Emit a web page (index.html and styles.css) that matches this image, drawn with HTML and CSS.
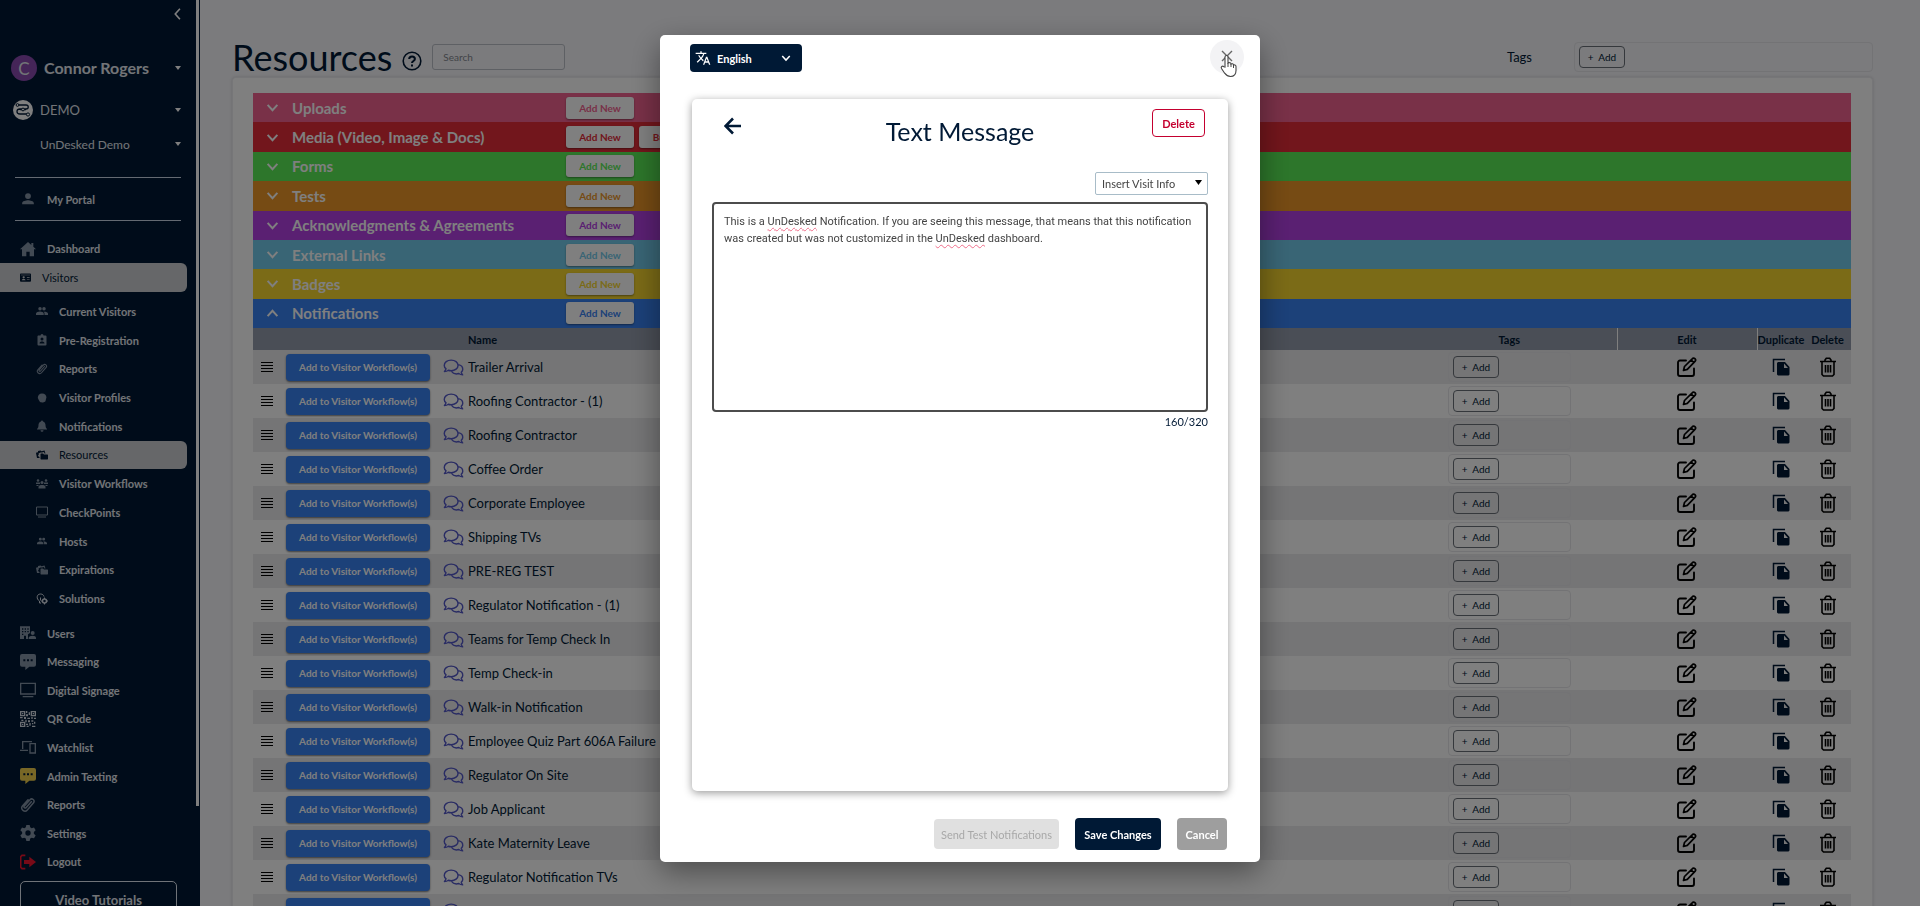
FILE: index.html
```html
<!DOCTYPE html>
<html lang="en">

<head>
    <meta charset="UTF-8">
    <meta name="viewport" content="width=device-width, initial-scale=1.0">
    <title>Resources</title>
    <link rel="stylesheet" href="styles.css">
</head>

<body>
    <!-- icons -->
    <svg class="sprite" aria-hidden="true">
        <symbol id="i-down" viewBox="0 0 12 12"><path d="M1.5 3.5L6 8.5l4.5-5" fill="none" stroke="currentColor" stroke-width="1.8"/></symbol>
        <symbol id="i-up" viewBox="0 0 12 12"><path d="M1.5 8.5L6 3.5l4.5 5" fill="none" stroke="currentColor" stroke-width="1.8"/></symbol>
        <symbol id="i-left" viewBox="0 0 12 12"><path d="M8.5 1.5L4.5 6l4 4.5" fill="none" stroke="currentColor" stroke-width="1.4"/></symbol>
        <symbol id="i-person" viewBox="0 0 24 24"><path d="M12 12a5 5 0 1 0 0-10 5 5 0 0 0 0 10zM2 21v-2c0-3.5 6.5-5 10-5s10 1.5 10 5v2z"/></symbol>
        <symbol id="i-people" viewBox="0 0 24 24"><path d="M8 11a3.5 3.5 0 1 0 0-7 3.5 3.5 0 0 0 0 7zm8 0a3.5 3.5 0 1 0 0-7 3.5 3.5 0 0 0 0 7zM0 20v-3c0-2.5 4.5-4 8-4 3.600 0 7.5 1.5 7.5 4v3zm17 0v-3c0-1.600-.7-2.800-2-3.700 4-.3 9 .9 9 3.700v3z"/></symbol>
        <symbol id="i-home" viewBox="0 0 24 24"><path d="M12 1.5L0 12.500h3V23h6.500v-7h5v7H21V12.500h3l-4-3.700V3h-3v3z"/></symbol>
        <symbol id="i-card" viewBox="0 0 24 24"><path fill-rule="evenodd" d="M2 3h20a2 2 0 0 1 2 2v14a2 2 0 0 1-2 2H2a2 2 0 0 1-2-2V5a2 2 0 0 1 2-2zm0 3v1h20V6zm6 8a2.500 2.500 0 1 0 0-5 2.500 2.500 0 0 0 0 5zm-4 4h8c0-2-1.800-3-4-3s-4 1-4 3zm11-7v1.500h6V11zm0 4v1.500h6V15z"/></symbol>
        <symbol id="i-badge" viewBox="0 0 24 24"><path fill-rule="evenodd" d="M5 3h4a3 3 0 0 1 6 0h4a2 2 0 0 1 2 2v16a2 2 0 0 1-2 2H5a2 2 0 0 1-2-2V5c0-1.100.9-2 2-2zm7 10a3 3 0 1 0 0-6 3 3 0 0 0 0 6zm-5 6h10c0-3-2.500-4-5-4s-5 1-5 4z"/></symbol>
        <symbol id="i-clip" viewBox="0 0 24 24"><path d="M17 7l-8 9c-1.300 1.500-4-.5-2.700-2.200L15 4c3-3 8 1 5.300 4.700L11 19.500c-4 4.500-11-1-7.300-6L12 4" fill="none" stroke="currentColor" stroke-width="2.2" stroke-linecap="round"/></symbol>
        <symbol id="i-head" viewBox="0 0 24 24"><path d="M12 1c7 0 11 4 10.500 10l-2 8c-2 4-12 5-14 1.500L4 16 2 12C1.500 5 6 1 12 1z"/></symbol>
        <symbol id="i-bell" viewBox="0 0 24 24"><path d="M12 1a2 2 0 0 0-2 2c-3.500 1-5 4-5 7 0 4-1 6-3 8v1h20v-1c-2-2-3-4-3-8 0-3-1.500-6-5-7a2 2 0 0 0-2-2zM9 20.500a3 3 0 0 0 6 0z"/></symbol>
        <symbol id="i-folders" viewBox="0 0 24 24"><path d="M10 9h4l2 2h7l1 1v8l-1 1H10l-1-1V10z"/><path d="M7 18H2L0 8l1-1 3-.5V4l5-1 2 1.500L17 3l2 6h-2l-1-3-4 1H9L7 8l-2 1 1 2-2 1 1 3 2 1z"/></symbol>
        <symbol id="i-group" viewBox="0 0 24 24"><circle cx="4" cy="5" r="2.500"/><circle cx="20" cy="5" r="2.500"/><circle cx="12" cy="9" r="3"/><path d="M0 12V9h8v3zm16 0V9h8v3zM5 21v-3c0-3 3-4 7-4s7 1 7 4v3zM1 14h4v2H1zm18 0h4v2h-4z"/></symbol>
        <symbol id="i-monitor" viewBox="0 0 24 24"><path d="M1 2h22v16H1zM4 22h16" fill="none" stroke="currentColor" stroke-width="2"/></symbol>
        <symbol id="i-bulb" viewBox="0 0 24 24"><path d="M7 20v-4C0 12 1 2 9 2c4 0 6 2 7 5M7 20h3M9 15V9" fill="none" stroke="currentColor" stroke-width="2"/><circle cx="17" cy="16" r="4" fill="none" stroke="currentColor" stroke-width="3"/><path d="M16 9h2v3h-2zm0 11h2v3h-2zm-6-5h3v2h-3zm11 0h3v2h-3z"/></symbol>
        <symbol id="i-building" viewBox="0 0 24 24"><path fill-rule="evenodd" d="M1 2h14v10l-3 2v7H9v-5H6v5H0V2zm2 3v2h2V5zm4 0v2h2V5zm4 0v2h2V5zM3 9v2h2V9zm4 0v2h2V9zm4 0v2h2V9zM3 13v2h2v-2z"/><circle cx="19" cy="12" r="3"/><path d="M13 21v-2c0-2 3-3 6-3s5 1 5 3v2z"/></symbol>
        <symbol id="i-chat" viewBox="0 0 24 24"><path fill-rule="evenodd" d="M3 0h18a3 3 0 0 1 3 3v13a3 3 0 0 1-3 3h-7l-6 5v-5H3a3 3 0 0 1-3-3V3a3 3 0 0 1 3-3zm2 8v3h3V8zm5.500 0v3h3V8zM16 8v3h3V8z"/></symbol>
        <symbol id="i-qr" viewBox="0 0 24 24"><path d="M1 1h6v6H1zM17 1h6v6h-6zM1 17h6v6H1z" fill="none" stroke="currentColor" stroke-width="2"/><path d="M9 0h2v3H9zm4 2h2v4h-2zM9 5h3v3H9zM0 9h4v2H0zm6 0h3v3H6zm5 1h4v2h-4zm6-1h2v3h-2zm4 1h3v2h-3zM2 13h3v2H2zm6 0h2v4H8zm4 1h3v3h-3zm5 0h3v2h-3zm4 2h2v3h-2zM9 19h3v2H9zm5-1h2v4h-2zm4 0h2v2h-2zm0 4h5v2h-5zm-8 0h3v2h-3zM3 3h2v2H3zm16 0h2v2h-2zM3 19h2v2H3z"/></symbol>
        <symbol id="i-devices" viewBox="0 0 24 24"><path d="M18 4H4v11M0 17h12M15 7h8v14h-8z" fill="none" stroke="currentColor" stroke-width="2"/></symbol>
        <symbol id="i-gear" viewBox="0 0 24 24"><path fill-rule="evenodd" d="M9.500 0h5l.8 3.500 2.200 1.200L21 3.600l2.500 4.300-2.700 2.500v2.800l2.700 2.500-2.500 4.300-3.500-1-2.200 1.300-.8 3.700h-5l-.8-3.700L6.500 19 3 20 .5 15.700l2.700-2.500v-2.800L.5 7.900 3 3.600l3.500 1.100 2.200-1.200zM12 16a4 4 0 1 0 0-8 4 4 0 0 0 0 8z"/></symbol>
        <symbol id="i-logout" viewBox="0 0 24 24"><path d="M8 2H3L1 4v16l2 2h5" fill="none" stroke="currentColor" stroke-width="2.500"/><path d="M6 9h8V4l10 8-10 8v-5H6z"/></symbol>
        <symbol id="i-bars" viewBox="0 0 12 12"><path d="M0 1.500h12M0 4.500h12M0 7.500h12M0 10.500h12" stroke="currentColor" stroke-width="1.200"/></symbol>
        <symbol id="i-talk" viewBox="0 0 22 18"><path d="M8.500 1.200c4.200 0 7.300 2.500 7.300 5.600s-3.100 5.600-7.300 5.600c-1 0-2-.1-2.900-.5-1 .8-2.500 1.400-4.200 1.400.8-.9 1.500-1.900 1.700-3C1.900 9.300 1.200 8 1.200 6.800c0-3.100 3.100-5.600 7.300-5.600zM16 6c3 .6 4.800 2.500 4.800 4.800 0 1.300-.6 2.300-1.600 3.200.2 1.100.8 2 1.500 2.800-1.500 0-3-.6-4.100-1.400-3.200.9-6.300-.2-7.800-2.700" fill="none" stroke="currentColor" stroke-width="1.500" stroke-linejoin="round"/></symbol>
        <symbol id="i-edit" viewBox="0 0 20 20"><path d="M9 3.500H3a2 2 0 0 0-2 2V17a2 2 0 0 0 2 2h12a2 2 0 0 0 2-2v-5.500" fill="none" stroke="currentColor" stroke-width="1.900" stroke-linecap="round"/><path d="M6.500 13.500l1-4L15.200 1.800a1.800 1.800 0 0 1 2.800 2.600l-7.700 8zM14 3l3 2.700" fill="none" stroke="currentColor" stroke-width="1.700" stroke-linejoin="round"/></symbol>
        <symbol id="i-copy" viewBox="0 0 18 18"><path d="M1.500 14V1.500H13" fill="none" stroke="currentColor" stroke-width="1.500"/><path fill-rule="evenodd" d="M6 4h7l4.500 5v7.500l-1 1H6l-1-1V5zm6 1.500V10h4z"/></symbol>
        <symbol id="i-trash" viewBox="0 0 18 20"><path d="M1 4.500h16M3 4.500V17.500l1.500 1.500h9l1.500-1.500V4.500M6 4V3l1.300-1.800h3.400L12 3v1M6.500 8v7.500M9 8v7.500M11.500 8v7.500" fill="none" stroke="currentColor" stroke-width="1.600"/></symbol>
    </svg>

    <div class="page">
        <aside class="sidebar">
            <div class="side-inner">
                <button class="collapse" aria-label="Collapse menu"><svg><use href="#i-left"/></svg></button>
                <div class="account user"><span class="avatar">C</span><span class="label">Connor Rogers</span><i class="caret"></i></div>
                <div class="account org">
                    <svg class="logo" viewBox="0 0 20 20"><circle cx="10" cy="10" r="10" fill="#fff"/><path d="M5 5h8c3 0 3 4 0 4H7c-4 0-4 5 0 5h7M7 9.500h6" fill="none" stroke="#001935" stroke-width="1.300"/><circle cx="4.500" cy="5" r="1.400" fill="#fff" stroke="#001935"/><circle cx="10" cy="9.500" r="1.400" fill="#fff" stroke="#001935"/><circle cx="15" cy="14.500" r="1.600" fill="#fff" stroke="#001935"/></svg>
                    <span class="label">DEMO</span><i class="caret"></i>
                </div>
                <div class="account site"><span class="label">UnDesked Demo</span><i class="caret"></i></div>
                <nav>
                    <a class="item portal" href="#"><svg><use href="#i-person"/></svg>My Portal</a>
                    <a class="item" href="#"><svg><use href="#i-home"/></svg>Dashboard</a>
                    <a class="item visitors active" href="#"><svg><use href="#i-card"/></svg>Visitors</a>
                    <div class="submenu">
                        <a class="item" href="#"><svg><use href="#i-people"/></svg>Current Visitors</a>
                        <a class="item" href="#"><svg><use href="#i-badge"/></svg>Pre-Registration</a>
                        <a class="item" href="#"><svg><use href="#i-clip"/></svg>Reports</a>
                        <a class="item" href="#"><svg class="small"><use href="#i-head"/></svg>Visitor Profiles</a>
                        <a class="item" href="#"><svg><use href="#i-bell"/></svg>Notifications</a>
                        <a class="item active" href="#"><svg><use href="#i-folders"/></svg>Resources</a>
                        <a class="item" href="#"><svg><use href="#i-group"/></svg>Visitor Workflows</a>
                        <a class="item" href="#"><svg><use href="#i-monitor"/></svg>CheckPoints</a>
                        <a class="item" href="#"><svg class="small"><use href="#i-people"/></svg>Hosts</a>
                        <a class="item" href="#"><svg><use href="#i-folders"/></svg>Expirations</a>
                        <a class="item" href="#"><svg class="bright"><use href="#i-bulb"/></svg>Solutions</a>
                    </div>
                    <div class="menu">
                        <a class="item" href="#"><svg><use href="#i-building"/></svg>Users</a>
                        <a class="item" href="#"><svg><use href="#i-chat"/></svg>Messaging</a>
                        <a class="item" href="#"><svg><use href="#i-monitor"/></svg>Digital Signage</a>
                        <a class="item" href="#"><svg class="bright"><use href="#i-qr"/></svg>QR Code</a>
                        <a class="item" href="#"><svg><use href="#i-devices"/></svg>Watchlist</a>
                        <a class="item" href="#"><svg class="gold"><use href="#i-chat"/></svg>Admin Texting</a>
                        <a class="item" href="#"><svg><use href="#i-clip"/></svg>Reports</a>
                        <a class="item" href="#"><svg><use href="#i-gear"/></svg>Settings</a>
                        <a class="item" href="#"><svg class="red"><use href="#i-logout"/></svg>Logout</a>
                    </div>
                </nav>
                <button class="tutorials">Video Tutorials</button>
            </div>
            <div class="side-scroll"></div>
        </aside>

        <main class="main">
            <header class="head">
                <h1>Resources</h1>
                <svg class="help" viewBox="0 0 20 20"><circle cx="10" cy="10" r="8.800" fill="none" stroke="currentColor" stroke-width="1.600"/><path d="M7.200 8c0-3.500 5.700-3.500 5.700 0 0 2-2.900 2-2.900 4M10 13.500v2" fill="none" stroke="currentColor" stroke-width="2"/></svg>
                <input class="search" type="text" placeholder="Search" aria-label="Search">
                <span class="tags-label">Tags</span>
                <div class="tag-box"><button class="add">+&nbsp; Add</button></div>
            </header>

            <section class="panel">
                <div class="bands">
                    <div class="band uploads"><svg><use href="#i-down"/></svg><h2>Uploads</h2><button>Add New</button></div>
                    <div class="band media"><svg><use href="#i-down"/></svg><h2>Media (Video, Image &amp; Docs)</h2><button>Add New</button><button>Bulk Add</button></div>
                    <div class="band forms"><svg><use href="#i-down"/></svg><h2>Forms</h2><button>Add New</button></div>
                    <div class="band tests"><svg><use href="#i-down"/></svg><h2>Tests</h2><button>Add New</button></div>
                    <div class="band acks"><svg><use href="#i-down"/></svg><h2>Acknowledgments &amp; Agreements</h2><button>Add New</button></div>
                    <div class="band links"><svg><use href="#i-down"/></svg><h2>External Links</h2><button>Add New</button></div>
                    <div class="band badges"><svg><use href="#i-down"/></svg><h2>Badges</h2><button>Add New</button></div>
                    <div class="band notes"><svg><use href="#i-up"/></svg><h2>Notifications</h2><button>Add New</button></div>
                </div>
                <table class="list">
                    <thead>
                        <tr>
                            <th class="c-drag"></th>
                            <th class="c-flow"></th>
                            <th class="c-icon"></th>
                            <th class="c-name">Name</th>
                            <th class="c-tags">Tags</th>
                            <th class="c-edit">Edit</th>
                            <th class="c-act">Duplicate</th>
                            <th class="c-last">Delete</th>
                        </tr>
                    </thead>
                    <tbody id="rows"></tbody>
                </table>
            </section>
        </main>
    </div>

    <div class="overlay">
        <div class="modal" role="dialog" aria-label="Text Message">
            <div class="modal-top">
                <button class="lang">
                    <svg class="translate" viewBox="0 0 24 24"><path d="M12.900 15.100l-2.600-2.500c1.700-1.900 3-4.200 3.700-6.600h3V4h-7V2H8v2H1v2h11.200C11.500 7.900 10.400 9.700 9 11.300 8.100 10.300 7.300 9.200 6.700 8h-2c.7 1.600 1.700 3.200 3 4.600l-5.100 5L4 19l5-5 3.100 3.100zM18.500 10h-2L12 22h2l1.100-3h4.800l1.100 3h2zm-2.600 7l1.600-4.300 1.600 4.300z"/></svg>
                    English
                    <svg class="chev"><use href="#i-down"/></svg>
                </button>
                <button class="close" aria-label="Close">
                    <svg viewBox="0 0 12 12"><path d="M1 1l10 10M11 1L1 11" stroke="currentColor" stroke-width="1.400"/></svg>
                </button>
            </div>
            <div class="editor">
                <div class="editor-head">
                    <button class="back" aria-label="Back"><svg viewBox="0 0 18 18"><path d="M17 9H2M9 1.500L1.500 9 9 16.500" fill="none" stroke="currentColor" stroke-width="2.600"/></svg></button>
                    <h2>Text Message</h2>
                    <button class="delete">Delete</button>
                </div>
                <select class="insert" aria-label="Insert Visit Info">
                    <option>Insert Visit Info</option>
                </select>
                <div class="message" contenteditable="true" spellcheck="false" role="textbox" aria-label="Message">This is a <u>UnDesked</u> Notification. If you are seeing this message, that means that this notification was created but was not customized in the <u>UnDesked</u> dashboard.</div>
                <p class="count">160/320</p>
            </div>
            <div class="modal-foot">
                <button class="send" disabled>Send Test Notifications</button>
                <button class="save">Save Changes</button>
                <button class="cancel">Cancel</button>
            </div>
            <svg class="pointer" viewBox="0 0 18 24"><path d="M5 13V3c0-2 3-2 3 0v6l1-.5c1 0 2 .5 2 1.500 1-.7 2.500 0 2.500 1 1.500-.5 2.500.3 2.500 1.500v4c0 4-2 6-5.500 6S6 21 4.500 19L1.500 14.500c-1-1.700 1-3 2.200-1.800z" fill="#fff" stroke="#444" stroke-width="1.100"/><path d="M8 9v4M11 10v3M13.500 11v3" stroke="#444"/></svg>
        </div>
    </div>

    <script>
        const names = [
            "Trailer Arrival", "Roofing Contractor - (1)", "Roofing Contractor", "Coffee Order",
            "Corporate Employee", "Shipping TVs", "PRE-REG TEST", "Regulator Notification - (1)",
            "Teams for Temp Check In", "Temp Check-in", "Walk-in Notification",
            "Employee Quiz Part 606A Failure", "Regulator On Site", "Job Applicant",
            "Kate Maternity Leave", "Regulator Notification TVs", "Contractor Notification"
        ]
        document.querySelector("#rows").innerHTML = names.map(name => `
            <tr>
                <td class="c-drag"><svg class="bars"><use href="#i-bars"/></svg></td>
                <td class="c-flow"><button class="flow">Add to Visitor Workflow(s)</button></td>
                <td class="c-icon"><svg class="talk"><use href="#i-talk"/></svg></td>
                <td class="c-name">${name}</td>
                <td class="c-tags"><div class="tag-box"><button class="add">+&nbsp; Add</button></div></td>
                <td class="c-edit"><button class="icon" aria-label="Edit"><svg><use href="#i-edit"/></svg></button></td>
                <td class="c-act"><button class="icon copy" aria-label="Duplicate"><svg><use href="#i-copy"/></svg></button></td>
                <td class="c-last"><button class="icon" aria-label="Delete"><svg><use href="#i-trash"/></svg></button></td>
            </tr>`).join("")
    </script>
</body>

</html>
```

FILE: styles.css
```css
* {
    padding: 0;
    margin: 0;
    box-sizing: border-box;
}

body {
    font-family: Lato, "Liberation Sans", sans-serif;
    font-size: 14px;
    color: #001935;
    overflow: hidden;
}

button,
input,
select {
    font-family: inherit;
}

button {
    border: none;
    background: none;
    cursor: pointer;
}

a {
    color: inherit;
    text-decoration: none;
}

svg {
    fill: currentColor;
    flex: none;
}

.sprite {
    display: none;
}

.page {
    display: flex;
    height: 100vh;
    overflow: hidden;
    background-color: #f6f6fa;
}

/* sidebar */
.sidebar {
    display: flex;
    flex: none;
    width: 200px;
    height: 100vh;
    overflow: hidden;
    background-color: #001935;
    color: #e4e8ee;
}

.side-inner {
    width: 196px;
    flex: none;
}

.side-scroll {
    width: 3px;
    height: 89%;
    background-color: #fff;
}

.collapse {
    display: block;
    margin: 7px 12px 0 auto;
    width: 14px;
    height: 14px;
    color: #fff;
}

.collapse svg {
    width: 14px;
    height: 14px;
}

.account {
    display: flex;
    align-items: center;
    padding: 0 15px 0 11px;
}

.account .label {
    flex: 1;
}

.user {
    margin-top: 33px;
    height: 27px;
    font-size: 16px;
    font-weight: 700;
    gap: 7px;
}

.org {
    height: 20px;
    margin-top: 19px;
    font-size: 13px;
    gap: 7px;
    padding-left: 13px;
}

.site {
    height: 20px;
    margin-top: 14px;
    font-size: 12px;
    padding-left: 40px;
}

.avatar {
    width: 26px;
    height: 26px;
    border-radius: 50%;
    background-color: #8a4ab0;
    font-size: 17px;
    font-weight: 400;
    line-height: 28px;
    text-align: center;
}

.logo {
    width: 20px;
    height: 20px;
}

.caret {
    border: 3px solid transparent;
    border-top: 4px solid #fff;
    border-bottom: none;
}

.item {
    display: flex;
    align-items: center;
    gap: 11px;
    height: 29px;
    padding-left: 20px;
    margin-right: 9px;
    font-size: 11px;
    font-weight: 700;
}

.item svg {
    width: 16px;
    height: 16px;
    color: #8594a6;
}

.item svg.bright {
    color: #d4dbe4;
}

.item svg.gold {
    color: #f0cf4c;
}

.item svg.red {
    color: #f0142f;
}

.item.portal {
    height: 44px;
    margin: 23px 15px 13px;
    padding-left: 5px;
    border-top: 1px solid #c8d4e4;
    border-bottom: 1px solid #c8d4e4;
}

.item.portal svg {
    height: 14px;
}

.visitors svg {
    width: 11px;
    height: 11px;
}

.item.active {
    background-color: #ccced2;
    color: #001935;
    border-radius: 0 6px 6px 0;
    font-weight: 400;
}

.item.active svg {
    color: #001935;
}

.submenu {
    display: grid;
    grid-auto-rows: 1fr;
    height: 316px;
    margin-top: 5px;
}

.submenu .item {
    height: auto;
    padding-left: 36px;
}

.submenu .item svg {
    width: 12px;
    height: 12px;
}

.submenu .item svg.small {
    width: 10px;
    margin: 0 1px;
}

.menu {
    display: grid;
    grid-auto-rows: 1fr;
    height: 257px;
    margin-top: 6px;
}

.menu .item {
    height: auto;
}

.tutorials {
    display: block;
    width: 157px;
    height: 38px;
    margin: 5px 0 0 20px;
    border: 1px solid #dfe6f0;
    border-radius: 5px;
    color: inherit;
    font-size: 13px;
    font-weight: 700;
}

/* main */
.main {
    flex: 1;
    min-width: 0;
    padding: 37px 47px 0 32px;
}

.head {
    display: flex;
    align-items: center;
    height: 40px;
}

.head h1 {
    font-size: 36px;
    font-weight: 400;
    margin-right: 10px;
}

.help {
    width: 20px;
    height: 20px;
    margin-top: 8px;
    margin-right: 10px;
}

.search {
    width: 133px;
    height: 26px;
    padding: 0 10px;
    border: 1px solid #bcc0c8;
    border-radius: 3px;
    background: none;
    font-size: 10px;
}

.search::placeholder {
    color: #848890;
}

.tags-label {
    margin-left: auto;
    margin-right: 42px;
    font-size: 13px;
}

.tag-box {
    height: 30px;
    padding: 3px 4px;
    border: 1px solid #e6e6ea;
    border-radius: 4px;
    text-align: left;
}

.head .tag-box {
    width: 299px;
}

.add {
    display: block;
    width: 46px;
    height: 22px;
    border: 1px solid #6a7078;
    border-radius: 4px;
    color: #001935;
    font-size: 10px;
}

.panel {
    padding: 15px 21px 0 20px;
    background-color: #fff;
    border: 1px solid #ececf0;
    border-bottom: none;
    border-radius: 4px 4px 0 0;
    box-shadow: 0 0 3px rgba(0, 0, 0, .15);
}

.bands {
    display: grid;
    grid-auto-rows: 1fr;
    height: 235px;
}

.band {
    display: flex;
    align-items: center;
    padding-left: 13px;
    color: #fff;
}

.band svg {
    width: 13px;
    height: 13px;
    margin-right: 13px;
}

.band h2 {
    width: 274px;
    font-size: 15px;
    font-weight: 700;
}

.band button {
    width: 68px;
    height: 22px;
    margin-right: 5px;
    border-radius: 3px;
    background-color: #fff;
    box-shadow: 0 1px 2px rgba(0, 0, 0, .4);
    font-size: 10px;
    font-weight: 700;
    color: inherit;
}

.uploads { background-color: #f26290; }
.media { background-color: #e42c38; }
.forms { background-color: #5aec56; }
.tests { background-color: #ec9628; }
.acks { background-color: #b440e4; }
.links { background-color: #72caea; }
.badges { background-color: #f6d62e; }
.notes { background-color: #3882f2; }

.uploads button { color: #f26290; }
.media button { color: #e42c38; }
.forms button { color: #5aec56; }
.tests button { color: #ec9628; }
.acks button { color: #b440e4; }
.links button { color: #72caea; }
.badges button { color: #f6d62e; }
.notes button { color: #3882f2; }

.list {
    width: 100%;
    table-layout: fixed;
    border-collapse: collapse;
}

.list th {
    height: 22px;
    background-color: #949cac;
    font-size: 11px;
    font-weight: 700;
    vertical-align: middle;
}

.list td {
    height: 34px;
    font-size: 13px;
    text-align: center;
    vertical-align: middle;
}

.list tbody tr:nth-child(odd) {
    background-color: #eaeaec;
}

.list .c-drag {
    width: 27px;
}

.list .c-flow {
    width: 156px;
}

.list .c-icon {
    width: 32px;
}

.list .c-name {
    text-align: left;
}

.list .c-tags {
    width: 169px;
    padding-right: 46px;
}

.list .c-edit {
    width: 140px;
}

.list .c-act,
.list .c-last {
    width: 47px;
}

.list th.c-edit {
    border-left: 1px solid #fff;
    border-right: 1px solid #fff;
}

.list td svg {
    display: block;
    margin: 0 auto;
}

.bars {
    width: 12px;
    height: 12px;
    color: #000;
}

.flow {
    width: 144px;
    height: 27px;
    border-radius: 4px;
    background-color: #3882f2;
    box-shadow: 0 1px 2px rgba(0, 0, 0, .5);
    color: #fff;
    font-size: 10px;
    font-weight: 700;
}

.list td .talk {
    width: 21px;
    height: 17px;
    margin: 0 0 0 7px;
    color: #5358c8;
}

.icon {
    display: block;
    margin: 0 auto;
    color: #000;
}

.icon svg {
    width: 20px;
    height: 20px;
}

.icon.copy {
    color: #001935;
}

.icon.copy svg {
    width: 18px;
    height: 18px;
}

/* modal */
.overlay {
    position: fixed;
    inset: 0;
    display: flex;
    justify-content: center;
    padding: 35px 0 44px;
    background-color: rgba(0, 0, 0, .5);
}

.modal {
    position: relative;
    display: flex;
    flex-direction: column;
    width: 600px;
    padding: 9px 32px 12px;
    border-radius: 5px;
    background-color: #fff;
    box-shadow: 0 10px 30px rgba(0, 0, 0, .4);
}

.modal-top {
    display: flex;
    justify-content: space-between;
    align-items: flex-start;
    height: 55px;
    margin: 0 -16px 0 -2px;
}

.lang {
    display: flex;
    align-items: center;
    gap: 6px;
    width: 112px;
    height: 28px;
    padding: 0 11px 0 5px;
    border-radius: 4px;
    background-color: #001935;
    color: #fff;
    font-size: 11px;
    font-weight: 700;
}

.translate {
    width: 16px;
    height: 16px;
}

.chev {
    width: 10px;
    height: 10px;
    margin-left: auto;
}

.close {
    width: 34px;
    height: 34px;
    margin-top: -4px;
    border-radius: 50%;
    background-color: #f3f3f5;
    color: #666;
}

.close svg {
    width: 12px;
    height: 12px;
}

.pointer {
    position: absolute;
    left: 560px;
    top: 19px;
    width: 18px;
    height: 24px;
}

.editor {
    flex: 1;
    padding: 10px 20px;
    border-radius: 5px;
    box-shadow: 0 2px 8px rgba(0, 0, 0, .4);
}

.editor-head {
    display: grid;
    grid-template-columns: 1fr auto 1fr;
    align-items: start;
    height: 63px;
}

.back {
    width: 18px;
    height: 18px;
    margin: 8px 0 0 12px;
    color: #001935;
}

.back svg {
    width: 18px;
    height: 18px;
}

.editor-head h2 {
    margin-top: 7px;
    font-size: 25px;
    line-height: 30px;
    font-weight: 400;
}

.delete {
    justify-self: end;
    width: 53px;
    height: 28px;
    margin-right: 3px;
    border: 1px solid #c4002f;
    border-radius: 4px;
    color: #c4002f;
    font-size: 11px;
    font-weight: 700;
}

.insert {
    display: block;
    width: 113px;
    height: 23px;
    margin-left: auto;
    padding: 0 6px;
    border: 1px solid #a8bcc8;
    border-radius: 2px;
    appearance: none;
    background: #fff url("data:image/svg+xml,%3Csvg xmlns='http://www.w3.org/2000/svg' viewBox='0 0 7 5'%3E%3Cpath d='M0 0h7L3.5 5z'/%3E%3C/svg%3E") no-repeat right 5px top 7px / 7px 5px;
    color: #444;
    font-size: 11px;
}

.message {
    height: 210px;
    margin-top: 7px;
    padding: 9px 10px;
    border: 2px solid #4c4c4c;
    border-radius: 4px;
    font-family: Roboto, sans-serif;
    font-size: 11px;
    line-height: 17px;
    color: #444;
    outline: none;
}

.message u {
    text-decoration: underline wavy #f0708c 1px;
    text-underline-offset: 2px;
}

.count {
    margin-top: 2px;
    text-align: right;
    font-size: 11px;
    line-height: 16px;
}

.modal-foot {
    display: flex;
    align-items: center;
    justify-content: flex-end;
    gap: 16px;
    height: 32px;
    margin: 27px 1px 0 0;
}

.modal-foot button {
    height: 32px;
    border-radius: 4px;
    font-size: 11px;
    font-weight: 700;
    color: #fff;
}

.modal-foot .send {
    width: 125px;
    height: 30px;
    background-color: #e0e0e0;
    color: #a8a8a8;
    font-weight: 400;
}

.modal-foot .save {
    width: 86px;
    background-color: #001935;
}

.modal-foot .cancel {
    width: 50px;
    background-color: #9e9e9e;
}
```
